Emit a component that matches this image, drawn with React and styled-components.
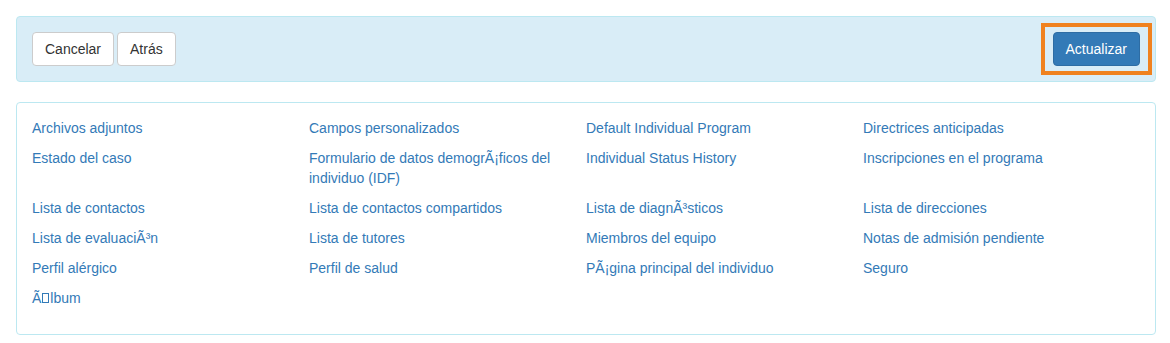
import React from "react";
import styled, { createGlobalStyle } from "styled-components";

const Global = createGlobalStyle`
  html, body { margin: 0; padding: 0; background: #fff; }
  body {
    font-family: "Liberation Sans", Arial, Helvetica, sans-serif;
    font-size: 14px;
    line-height: 1.42857143;
    color: #333;
  }
  * { box-sizing: border-box; }
`;

const Page = styled.div`
  width: 1140px;
  margin: 16px 0 0 16px;
`;

const Toolbar = styled.div`
  display: flex;
  align-items: center;
  justify-content: space-between;
  padding: 15px;
  background: #d9edf7;
  border: 1px solid #bce8f1;
  border-radius: 4px;
  margin-bottom: 20px;
`;

const Group = styled.div`
  display: flex;
  gap: 3px;
`;

const Button = styled.button`
  font-family: inherit;
  font-size: 14px;
  line-height: 20px;
  padding: 6px 12px;
  border-radius: 4px;
  border: 1px solid ${(p) => (p.$primary ? "#2e6da4" : "#ccc")};
  background: ${(p) => (p.$primary ? "#337ab7" : "#fff")};
  color: ${(p) => (p.$primary ? "#fff" : "#333")};
  cursor: pointer;
  height: 34px;
`;

const Highlight = styled.div`
  position: relative;
  display: flex;
  &::after {
    content: "";
    position: absolute;
    top: -9px;
    bottom: -9px;
    left: -12px;
    right: -12px;
    border: 4px solid #f0821f;
    pointer-events: none;
  }
`;

const Panel = styled.div`
  background: #fff;
  border: 1px solid #bce8f1;
  border-radius: 4px;
  padding: 15px 15px 16px;
`;

const LinkGrid = styled.div`
  display: grid;
  grid-template-columns: repeat(4, 277px);
  row-gap: 10px;
  padding-bottom: 10px;
`;

const Link = styled.a`
  color: #337ab7;
  text-decoration: none;
  line-height: 20px;
  padding-right: 15px;
`;

/* missing-glyph box shown for the stray U+0081 control character */
const Tofu = styled.span`
  display: inline-block;
  width: 7px;
  height: 10px;
  margin: 0 1px;
  border: 1px solid #337ab7;
  vertical-align: baseline;
`;

const links = [
  "Archivos adjuntos",
  "Campos personalizados",
  "Default Individual Program",
  "Directrices anticipadas",
  "Estado del caso",
  "Formulario de datos demogrÃ¡ficos del individuo (IDF)",
  "Individual Status History",
  "Inscripciones en el programa",
  "Lista de contactos",
  "Lista de contactos compartidos",
  "Lista de diagnÃ³sticos",
  "Lista de direcciones",
  "Lista de evaluaciÃ³n",
  "Lista de tutores",
  "Miembros del equipo",
  "Notas de admisión pendiente",
  "Perfil alérgico",
  "Perfil de salud",
  "PÃ¡gina principal del individuo",
  "Seguro",
  "Ã\u0081lbum",
];

function renderLabel(text) {
  const parts = text.split("\u0081");
  if (parts.length === 1) return text;
  return parts.reduce((acc, part, i) => {
    if (i > 0) acc.push(<Tofu key={"t" + i} aria-hidden="true" />);
    acc.push(part);
    return acc;
  }, []);
}

export default function App() {
  return (
    <Page>
      <Global />
      <Toolbar>
        <Group>
          <Button>Cancelar</Button>
          <Button>Atrás</Button>
        </Group>
        <Highlight>
          <Button $primary>Actualizar</Button>
        </Highlight>
      </Toolbar>
      <Panel>
        <LinkGrid>
          {links.map((l) => (
            <Link key={l} href="#">
              {renderLabel(l)}
            </Link>
          ))}
        </LinkGrid>
      </Panel>
    </Page>
  );
}
